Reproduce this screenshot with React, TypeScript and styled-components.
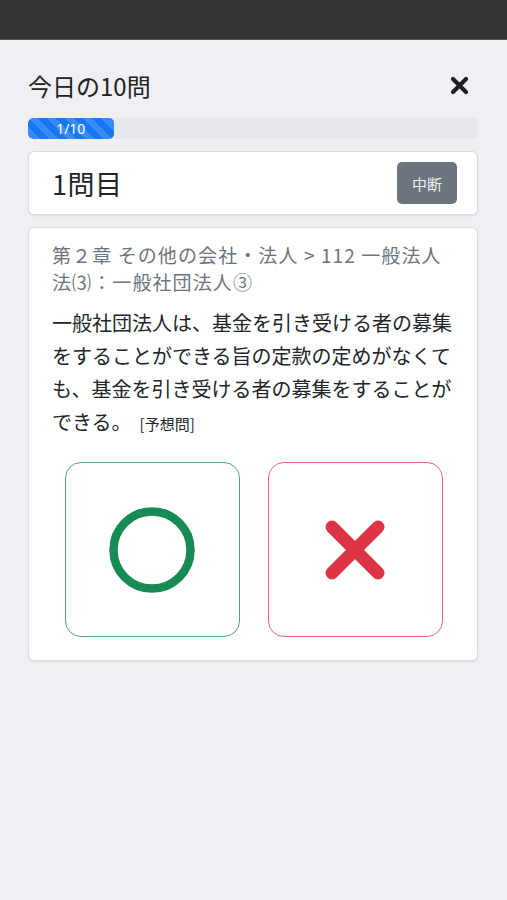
import styled, { createGlobalStyle } from 'styled-components'

const GlobalStyle = createGlobalStyle`
  html, body {
    margin: 0;
    padding: 0;
    background: #efeff4;
  }
  body {
    font-family: "Noto Sans CJK JP", "Noto Sans", sans-serif;
    color: #212529;
  }
`

const Page = styled.div`
  min-height: 900px;
  background: #efeff4;
`

const TopBar = styled.div`
  height: 39px;
  background: #333333;
  border-bottom: 1px solid #555;
`

const Content = styled.main`
  padding: 31px 29px 0 28px;
  display: flex;
  flex-direction: column;
`

const Header = styled.div`
  display: flex;
  justify-content: space-between;
  align-items: center;
  height: 28px;
`

const Title = styled.h1`
  margin: 0;
  font-size: 24px;
  font-weight: 400;
  color: #222;
`

const CloseButton = styled.button`
  border: 0;
  background: none;
  padding: 0;
  margin-right: 9px;
  width: 20px;
  height: 20px;
  display: flex;
  align-items: center;
  justify-content: center;
`

const Track = styled.div`
  margin-top: 19px;
  height: 21px;
  background: #e7e8ec;
  border-radius: 5px;
  overflow: hidden;
  display: flex;
`

const Fill = styled.div`
  height: 100%;
  background-color: #1677f4;
  background-image: linear-gradient(
    45deg,
    rgba(255, 255, 255, 0.15) 25%,
    transparent 25%,
    transparent 50%,
    rgba(255, 255, 255, 0.15) 50%,
    rgba(255, 255, 255, 0.15) 75%,
    transparent 75%,
    transparent
  );
  background-size: 18px 18px;
  border-radius: 5px;
  color: #fff;
  font-size: 14px;
  display: flex;
  align-items: center;
  justify-content: center;
  font-family: "Noto Sans", sans-serif;
`

const Card = styled.section`
  background: #fff;
  border: 1px solid #dcdce0;
  border-radius: 6px;
  box-shadow: 0 1px 2px rgba(0, 0, 0, 0.08);
`

const CountCard = styled(Card)`
  margin-top: 12px;
  height: 64px;
  box-sizing: border-box;
  padding: 0 20px 0 23px;
  display: flex;
  align-items: center;
  justify-content: space-between;
`

const Count = styled.div`
  font-size: 27px;
  color: #212529;
  letter-spacing: 0.5px;
`

const StopButton = styled.button`
  width: 60px;
  height: 42px;
  border: 0;
  border-radius: 5px;
  background: #6c757d;
  color: #eef0f2;
  font-size: 15px;
  font-family: "Noto Sans CJK JP", sans-serif;
`

const QuestionCard = styled(Card)`
  margin-top: 12px;
  padding: 13px 23px 23px 23px;
`

const Crumb = styled.div`
  font-size: 19px;
  letter-spacing: 1.1px;
  line-height: 27px;
  color: #6c757d;
`

const Body = styled.p`
  margin: 11px 0 0 0;
  font-size: 20px;
  line-height: 33px;
  color: #212529;
`

const Note = styled.span`
  font-size: 15px;
  line-height: 1;
  margin-left: 8px;
`

const Choices = styled.div`
  margin-top: 24px;
  display: flex;
  justify-content: center;
  gap: 28px;
  padding-left: 1px;
`

const Choice = styled.button<{ $color: string }>`
  width: 175px;
  height: 175px;
  background: #fff;
  border: 1.5px solid ${(p) => p.$color};
  border-radius: 16px;
  display: flex;
  align-items: center;
  justify-content: center;
  padding: 0;
`

const App = () => (
  <Page>
    <GlobalStyle />
    <TopBar />
    <Content>
      <Header>
        <Title>今日の10問</Title>
        <CloseButton aria-label="閉じる">
          <svg width="19" height="19" viewBox="0 0 19 19">
            <path d="M3 3 L16 16 M16 3 L3 16" stroke="#1e1e1e" strokeWidth="4.2" strokeLinecap="round" />
          </svg>
        </CloseButton>
      </Header>
      <Track>
        <Fill style={{ width: `${(1 / 10) * 100 * 1.9}%` }}>1/10</Fill>
      </Track>
      <CountCard>
        <Count>1問目</Count>
        <StopButton>中断</StopButton>
      </CountCard>
      <QuestionCard>
        <Crumb>第２章 その他の会社・法人 &gt; 112 一般法人法⑶：一般社団法人③</Crumb>
        <Body>
          一般社団法人は、基金を引き受ける者の募集をすることができる旨の定款の定めがなくても、基金を引き受ける者の募集をすることができる。
          <Note>[予想問]</Note>
        </Body>
        <Choices>
          <Choice $color="#4fa57c" aria-label="○">
            <svg width="86" height="86" viewBox="0 0 86 86">
              <circle cx="43" cy="43" r="38.5" fill="none" stroke="#188a56" strokeWidth="8.5" />
            </svg>
          </Choice>
          <Choice $color="#e56b77" aria-label="×">
            <svg width="62" height="62" viewBox="0 0 62 62">
              <path d="M8 8 L54 54 M54 8 L8 54" stroke="#dc3545" strokeWidth="13" strokeLinecap="round" />
            </svg>
          </Choice>
        </Choices>
      </QuestionCard>
    </Content>
  </Page>
)

export default App
